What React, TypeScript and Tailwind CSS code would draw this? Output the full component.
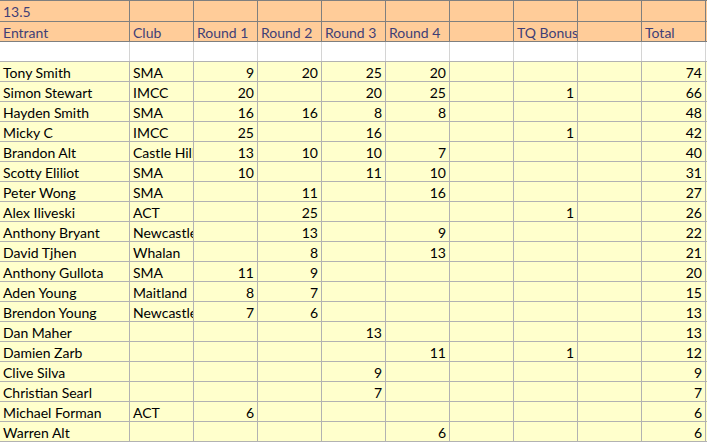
import React from 'react';

type Row = {
  name: string;
  club: string;
  r1?: number;
  r2?: number;
  r3?: number;
  r4?: number;
  tq?: number;
  total: number;
};

const rows: Row[] = [
  { name: 'Tony Smith', club: 'SMA', r1: 9, r2: 20, r3: 25, r4: 20, total: 74 },
  { name: 'Simon Stewart', club: 'IMCC', r1: 20, r3: 20, r4: 25, tq: 1, total: 66 },
  { name: 'Hayden Smith', club: 'SMA', r1: 16, r2: 16, r3: 8, r4: 8, total: 48 },
  { name: 'Micky C', club: 'IMCC', r1: 25, r3: 16, tq: 1, total: 42 },
  { name: 'Brandon Alt', club: 'Castle Hill', r1: 13, r2: 10, r3: 10, r4: 7, total: 40 },
  { name: 'Scotty Eliliot', club: 'SMA', r1: 10, r3: 11, r4: 10, total: 31 },
  { name: 'Peter Wong', club: 'SMA', r2: 11, r4: 16, total: 27 },
  { name: 'Alex Iliveski', club: 'ACT', r2: 25, tq: 1, total: 26 },
  { name: 'Anthony Bryant', club: 'Newcastle', r2: 13, r4: 9, total: 22 },
  { name: 'David Tjhen', club: 'Whalan', r2: 8, r4: 13, total: 21 },
  { name: 'Anthony Gullota', club: 'SMA', r1: 11, r2: 9, total: 20 },
  { name: 'Aden Young', club: 'Maitland', r1: 8, r2: 7, total: 15 },
  { name: 'Brendon Young', club: 'Newcastle', r1: 7, r2: 6, total: 13 },
  { name: 'Dan Maher', club: '', r3: 13, total: 13 },
  { name: 'Damien Zarb', club: '', r4: 11, tq: 1, total: 12 },
  { name: 'Clive Silva', club: '', r3: 9, total: 9 },
  { name: 'Christian Searl', club: '', r3: 7, total: 7 },
  { name: 'Michael Forman', club: 'ACT', r1: 6, total: 6 },
  { name: 'Warren Alt', club: '', r4: 6, total: 6 },
];

const headers = ['Entrant', 'Club', 'Round 1', 'Round 2', 'Round 3', 'Round 4', '', 'TQ Bonus', '', 'Total'];

const font = { fontFamily: 'Lato, "Liberation Sans", sans-serif' };

function Cell({
  children,
  right,
  className = '',
}: {
  children?: React.ReactNode;
  right?: boolean;
  className?: string;
}) {
  return (
    <div
      className={`h-full overflow-hidden whitespace-nowrap border-r px-[3px] pt-[2px] leading-[18px] ${
        right ? 'text-right' : 'text-left'
      } ${className}`}
    >
      {children}
    </div>
  );
}

const grid = 'grid grid-cols-[130px_repeat(9,64px)]';

export default function App() {
  return (
    <div className="h-[443px] w-[707px] overflow-hidden bg-white text-[14px]" style={font}>
      {/* title row */}
      <div className={`${grid} h-[22px] border-y border-[#7f7f7f] bg-[#ffcc99] text-[#3f3f76]`}>
        <Cell className="border-[#7f7f7f]">13.5</Cell>
        {Array.from({ length: 9 }).map((_, i) => (
          <Cell key={i} className="border-[#7f7f7f]" />
        ))}
      </div>

      {/* header row */}
      <div className={`${grid} h-[20px] border-b border-[#7f7f7f] bg-[#ffcc99] text-[#3f3f76]`}>
        {headers.map((h, i) => (
          <Cell key={i} className="border-[#7f7f7f]">
            {h}
          </Cell>
        ))}
      </div>

      {/* blank row */}
      <div className={`${grid} h-[20px] border-b border-[#b2b2b2] bg-white`}>
        {headers.map((_, i) => (
          <Cell key={i} className="border-[#d4d4d4]" />
        ))}
      </div>

      {rows.map((r) => (
        <div key={r.name} className={`${grid} h-[20px] border-b border-[#b2b2b2] bg-[#ffffcc] text-black`}>
          <Cell className="border-[#b2b2b2]">{r.name}</Cell>
          <Cell className="border-[#b2b2b2]">{r.club}</Cell>
          <Cell right className="border-[#b2b2b2]">{r.r1}</Cell>
          <Cell right className="border-[#b2b2b2]">{r.r2}</Cell>
          <Cell right className="border-[#b2b2b2]">{r.r3}</Cell>
          <Cell right className="border-[#b2b2b2]">{r.r4}</Cell>
          <Cell right className="border-[#b2b2b2]" />
          <Cell right className="border-[#b2b2b2]">{r.tq}</Cell>
          <Cell right className="border-[#b2b2b2]" />
          <Cell right className="border-[#b2b2b2]">{r.total}</Cell>
        </div>
      ))}
    </div>
  );
}
